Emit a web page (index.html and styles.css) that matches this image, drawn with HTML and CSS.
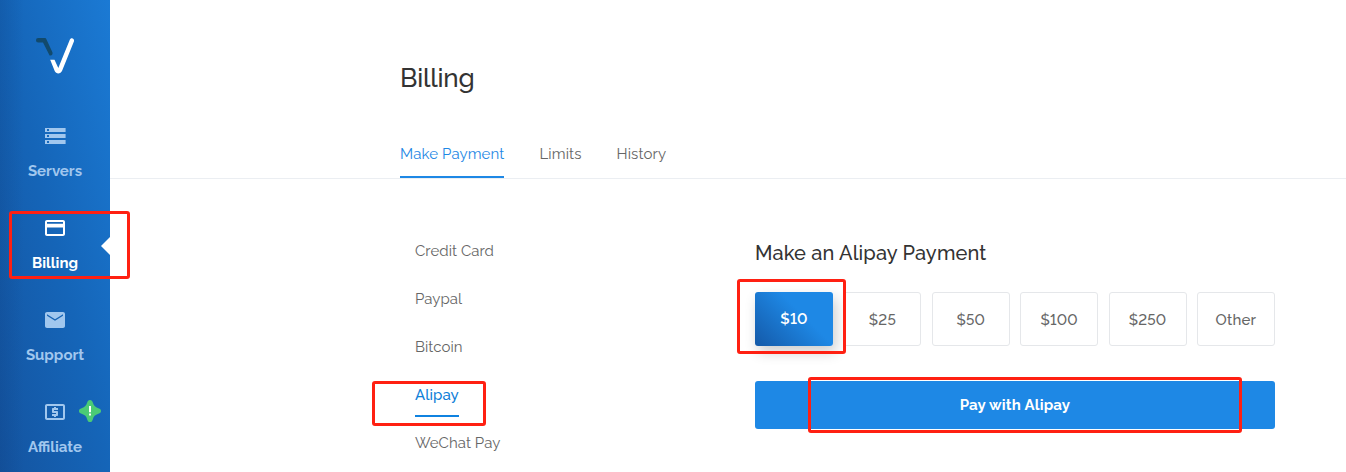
FILE: index.html
```html
<!DOCTYPE html>
<html lang="en">
<head>
    <meta charset="UTF-8">
    <meta name="viewport" content="width=device-width, initial-scale=1.0">
    <title>Billing</title>
    <link rel="stylesheet" href="styles.css">
</head>
<body>
    <div class="app">
        <nav class="sidebar">
            <a class="logo" href="#">
                <svg width="42" height="40" viewBox="0 0 42 40">
                    <path class="logo-dark" d="M4.200 2h6.300c1 0 1.600.5 2 1.400l5.900 12.800c.6 1.400-.2 3.300-1.900 3.300h-.9L9 6.500H4.200a2.250 2.250 0 0 1 0-4.500z"/>
                    <path class="logo-light" d="M16.200 23.700h4.300l3.800 8.200L35.700 4c.5-1.300 1.700-2 2.900-1.500 1.300.5 1.800 1.800 1.300 3.100L28.200 34.500c-1.400 3.700-6 3.900-7.500.6z"/>
                </svg>
            </a>
            <a class="nav-item" href="#">
                <svg width="24" height="24" viewBox="0 0 24 24"><path fill-rule="evenodd" d="M2 4h20.600v4H2zM2 10h20.600v4H2zM2 16h20.600v4H2zM4 5h2v2H4zM4 11h2v2H4zM4 17h2v2H4z"/></svg>
                <span class="nav-label">Servers</span>
            </a>
            <a class="nav-item active" href="#">
                <svg width="24" height="24" viewBox="0 0 24 24"><path d="M20 4H4c-1.110 0-1.990.89-1.990 2L2 18c0 1.110.89 2 2 2h16c1.110 0 2-.89 2-2V6c0-1.110-.89-2-2-2zm0 14H4v-6.500h16V18zm0-10.200H4V6h16v1.800z"/></svg>
                <span class="nav-label">Billing</span>
            </a>
            <a class="nav-item" href="#">
                <svg width="24" height="24" viewBox="0 0 24 24"><path d="M20 4H4c-1.100 0-1.990.9-1.990 2L2 18c0 1.100.9 2 2 2h16c1.100 0 2-.9 2-2V6c0-1.100-.9-2-2-2zm0 3.800l-8 5-8-5V6.300l8 5 8-5v1.500z"/></svg>
                <span class="nav-label">Support</span>
            </a>
            <a class="nav-item" href="#">
                <svg width="24" height="24" viewBox="0 0 24 24"><path d="M11 17h2v-1h1c.55 0 1-.45 1-1v-3c0-.55-.45-1-1-1h-3v-1h4V8h-2V7h-2v1h-1c-.55 0-1 .45-1 1v3c0 .55.45 1 1 1h3v1H9v2h2v1zm9-13H4c-1.110 0-1.990.89-1.990 2L2 18c0 1.110.89 2 2 2h16c1.110 0 2-.89 2-2V6c0-1.110-.89-2-2-2zm0 14H4V6h16v12z"/></svg>
                <span class="nav-label">Affiliate</span>
                <svg class="nav-badge" width="22" height="22" viewBox="0 0 22 22">
                    <path class="badge-star" d="M11 0c1.600 0 2.300 1 2.800 2.600.9 3 2.300 4.600 5.600 5.600C21.200 8.800 22 9.600 22 11s-.8 2.200-2.600 2.800c-3.300 1-4.700 2.600-5.600 5.600C13.300 21 12.600 22 11 22s-2.300-1-2.800-2.600c-.9-3-2.300-4.600-5.600-5.600C.8 13.200 0 12.400 0 11s.8-2.200 2.600-2.800c3.300-1 4.700-2.600 5.600-5.600C8.700 1 9.400 0 11 0z"/>
                    <path class="badge-mark" d="M10 6h2v6.200h-2zM10 13.500h2v2h-2z"/>
                </svg>
            </a>
        </nav>

        <main class="content">
            <header class="page-header">
                <h1>Billing</h1>
                <div class="tabs">
                    <a class="tab active" href="#">Make Payment</a>
                    <a class="tab" href="#">Limits</a>
                    <a class="tab" href="#">History</a>
                </div>
            </header>

            <div class="billing">
                <div class="methods">
                    <a class="method" href="#">Credit Card</a>
                    <a class="method" href="#">Paypal</a>
                    <a class="method" href="#">Bitcoin</a>
                    <a class="method active" href="#">Alipay</a>
                    <a class="method" href="#">WeChat Pay</a>
                </div>
                <section class="payment">
                    <h2>Make an Alipay Payment</h2>
                    <div class="amounts">
                        <button class="amount active">$10</button>
                        <button class="amount">$25</button>
                        <button class="amount">$50</button>
                        <button class="amount">$100</button>
                        <button class="amount">$250</button>
                        <button class="amount">Other</button>
                    </div>
                    <button class="pay-button">Pay with Alipay</button>
                </section>
            </div>
        </main>

        <div class="mark mark-nav"></div>
        <div class="mark mark-method"></div>
        <div class="mark mark-amount"></div>
        <div class="mark mark-pay"></div>
    </div>
</body>
</html>
```
FILE: styles.css
```css
* {
    box-sizing: border-box;
}
body {
    margin: 0;
    font-family: Raleway, Lato, sans-serif;
    font-size: 15px;
    font-variant-numeric: lining-nums;
    color: #666;
    background-color: #fff;
}
a {
    color: inherit;
    text-decoration: none;
}
button {
    font-family: inherit;
    font-variant-numeric: inherit;
    cursor: pointer;
}
.app {
    position: relative;
    display: flex;
    height: 472px;
    overflow: hidden;
}

/* sidebar */
.sidebar {
    width: 110px;
    flex-shrink: 0;
    background: linear-gradient(to right, rgba(10, 50, 110, 0.16), rgba(10, 50, 110, 0) 24px), linear-gradient(to top right, #1454a0, #1565b8 50%, #1b7ad4);
}
.logo {
    display: flex;
    height: 108px;
    padding: 36px 0 0 34px;
}
.logo-dark {
    fill: #124a6c;
}
.logo-light {
    fill: #fff;
}
.nav-item {
    position: relative;
    display: flex;
    flex-direction: column;
    align-items: center;
    gap: 13px;
    height: 92px;
    padding-top: 16px;
    color: #a1c7ee;
    fill: #a1c7ee;
    font-weight: 700;
}
.nav-item.active {
    color: #fff;
    fill: #fff;
}
.nav-item.active::after {
    content: "";
    position: absolute;
    right: 0;
    top: 37px;
    border: 9px solid transparent;
    border-right-color: #fff;
    border-left-width: 0;
}
.nav-label {
    line-height: 20px;
}
.nav-badge {
    position: absolute;
    left: 79px;
    top: 16px;
}
.badge-star {
    fill: #4bcb76;
}
.badge-mark {
    fill: #fff;
}

/* page */
.content {
    flex: 1;
}
.page-header {
    height: 179px;
    padding: 62px 0 0 290px;
    border-bottom: 1px solid #ebeef2;
}
h1 {
    margin: 0;
    font-size: 26px;
    font-weight: 500;
    line-height: 32px;
    letter-spacing: -0.2px;
    color: #333;
}
.tabs {
    display: flex;
    gap: 35px;
    margin-top: 48px;
}
.tab {
    height: 36px;
    line-height: 24px;
    letter-spacing: 0.12px;
    border-bottom: 2px solid transparent;
}
.tab.active {
    color: #1e88e5;
    border-bottom-color: #1e88e5;
}
.billing {
    display: flex;
    padding: 60px 0 0 305px;
}
.methods {
    display: flex;
    flex-direction: column;
    align-items: flex-start;
    width: 340px;
}
.method {
    height: 34px;
    margin-bottom: 14px;
    line-height: 24px;
    letter-spacing: 0.05px;
}
.method.active {
    color: #1080d8;
    font-weight: 500;
    border-bottom: 2px solid #0f82e0;
}
.payment {
    width: 520px;
}
h2 {
    margin: 0 0 25px;
    font-size: 20px;
    font-weight: 500;
    line-height: 28px;
    letter-spacing: 0.14px;
    color: #333;
}
.amounts {
    display: flex;
    justify-content: space-between;
    margin-bottom: 35px;
}
.amount {
    width: 78px;
    height: 54px;
    padding: 2px 0 0;
    border: 1px solid #e5e7ea;
    border-radius: 3px;
    background: #fff;
    color: #666;
    font-size: 15px;
    font-weight: 500;
    letter-spacing: 0.2px;
}
.amount.active {
    border: none;
    padding: 0;
    background: linear-gradient(45deg, #1459a8, #1e88e5 60%);
    box-shadow: 3px 6px 14px rgba(0, 0, 0, 0.2);
    color: #fff;
    font-weight: 600;
}
.pay-button {
    width: 100%;
    height: 48px;
    border: none;
    border-radius: 3px;
    background: #1e88e5;
    color: #fff;
    font-size: 15px;
    font-weight: 700;
    letter-spacing: 0.2px;
}

/* red highlight boxes over the steps */
.mark {
    position: absolute;
    border: 3px solid #ff2012;
    border-radius: 3px;
}
.mark-nav {
    left: 9px;
    top: 211px;
    width: 121px;
    height: 68px;
}
.mark-method {
    left: 372px;
    top: 381px;
    width: 114px;
    height: 45px;
}
.mark-amount {
    left: 737px;
    top: 279px;
    width: 109px;
    height: 75px;
}
.mark-pay {
    left: 808px;
    top: 377px;
    width: 434px;
    height: 56px;
}
```
